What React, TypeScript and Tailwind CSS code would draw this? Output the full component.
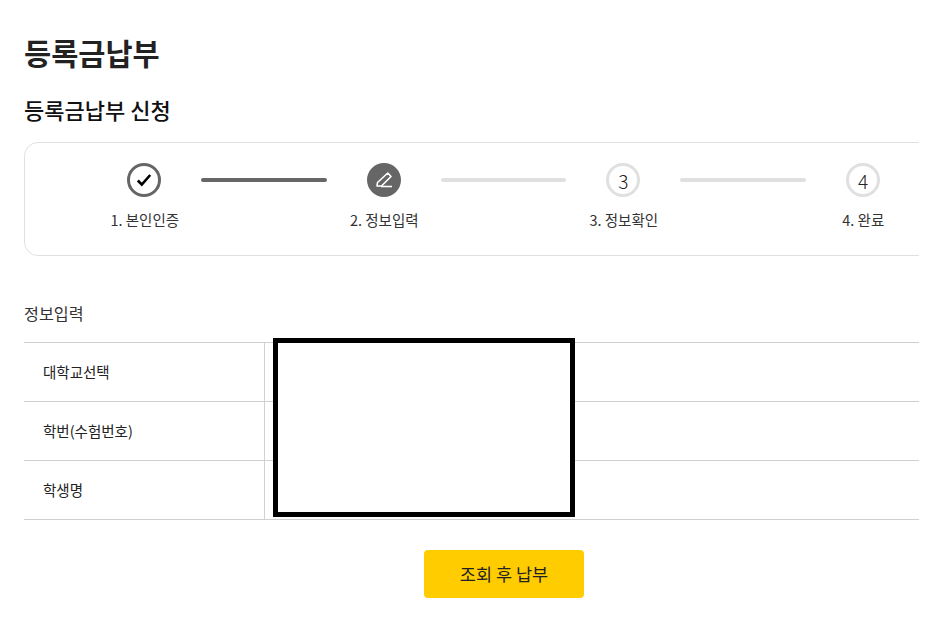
import React from "react";

function CircleCheck() {
  return (
    <div className="flex h-[34px] w-[34px] shrink-0 items-center justify-center rounded-full border-[3px] border-[#666666] bg-white">
      <svg width="16" height="14" viewBox="0 0 16 14" fill="none">
        <path d="M1.8 7.5 L5.8 11.5 L14.2 2" stroke="#000" strokeWidth="2.6" />
      </svg>
    </div>
  );
}

function CirclePen() {
  return (
    <div className="flex h-[34px] w-[34px] shrink-0 items-center justify-center rounded-full bg-[#666666]">
      <svg width="18" height="16" viewBox="0 0 18 16" fill="none">
        <path d="M2 14 L2.5 10.5 L12.8 1 L16 4.5 L6.5 14 Z" stroke="#fff" strokeWidth="1.6" strokeLinejoin="round" />
        <path d="M6 14.5 H17" stroke="#fff" strokeWidth="1.6" />
      </svg>
    </div>
  );
}

function CircleNum({ n }: { n: number }) {
  return (
    <div className="flex h-[34px] w-[34px] shrink-0 items-center justify-center rounded-full border-[3px] border-[#e0e0e0] bg-white text-[19px] font-light leading-none text-[#222222]">
      {n}
    </div>
  );
}

function Line({ on }: { on?: boolean }) {
  return <div className={on ? "h-1 w-[125.67px] rounded-full bg-[#666666]" : "h-1 w-[125.67px] rounded-full bg-[#e0e0e0]"} />;
}

function Row({ label }: { label: string }) {
  return (
    <div className="flex h-[59px] border-b border-[#d0d0d0]">
      <div className="flex w-[241px] items-center border-r border-[#d0d0d0] pl-[19px] text-[14.5px] text-[#222222]">{label}</div>
      <div className="flex-1" />
    </div>
  );
}

export default function App() {
  return (
    <div className="h-[626px] w-[919px] overflow-hidden bg-white pl-6 font-['Noto_Sans_CJK_KR','Liberation_Sans',sans-serif] text-[#222222]">
      <div className="relative w-[960px] pt-[28px]">
        <h1 className="text-[29.5px] font-bold leading-[48px] text-[#222222]">등록금납부</h1>
        <h2 className="mt-[17px] text-[22px] font-medium leading-[32px] text-[#111111]">등록금납부 신청</h2>

        <div className="mt-[17px] h-[114px] rounded-[14px] border border-[#e0e0e0] pt-5">
          <div className="flex items-center justify-center gap-10 pr-[1px]">
            <CircleCheck />
            <Line on />
            <CirclePen />
            <Line />
            <CircleNum n={3} />
            <Line />
            <CircleNum n={4} />
          </div>
          <div className="mt-[12px] grid grid-cols-4 text-center text-[14.5px] leading-[22px] text-[#333333]">
            <div>1. 본인인증</div>
            <div>2. 정보입력</div>
            <div>3. 정보확인</div>
            <div>4. 완료</div>
          </div>
        </div>

        <h3 className="mt-[44px] text-[16.2px] leading-[26px] text-[#333333]">정보입력</h3>

        <div className="relative mt-[16px] border-t border-[#d0d0d0]">
          <Row label="대학교선택" />
          <Row label="학번(수험번호)" />
          <Row label="학생명" />
          <div className="absolute left-[249px] top-[-5px] h-[179px] w-[302px] border-[5px] border-black bg-white" />
        </div>

        <div className="mt-[30px] flex justify-center">
          <button className="h-12 w-40 rounded-[4px] bg-[#ffcc00] text-[17.5px] text-[#222222]">조회 후 납부</button>
        </div>
      </div>
    </div>
  );
}
